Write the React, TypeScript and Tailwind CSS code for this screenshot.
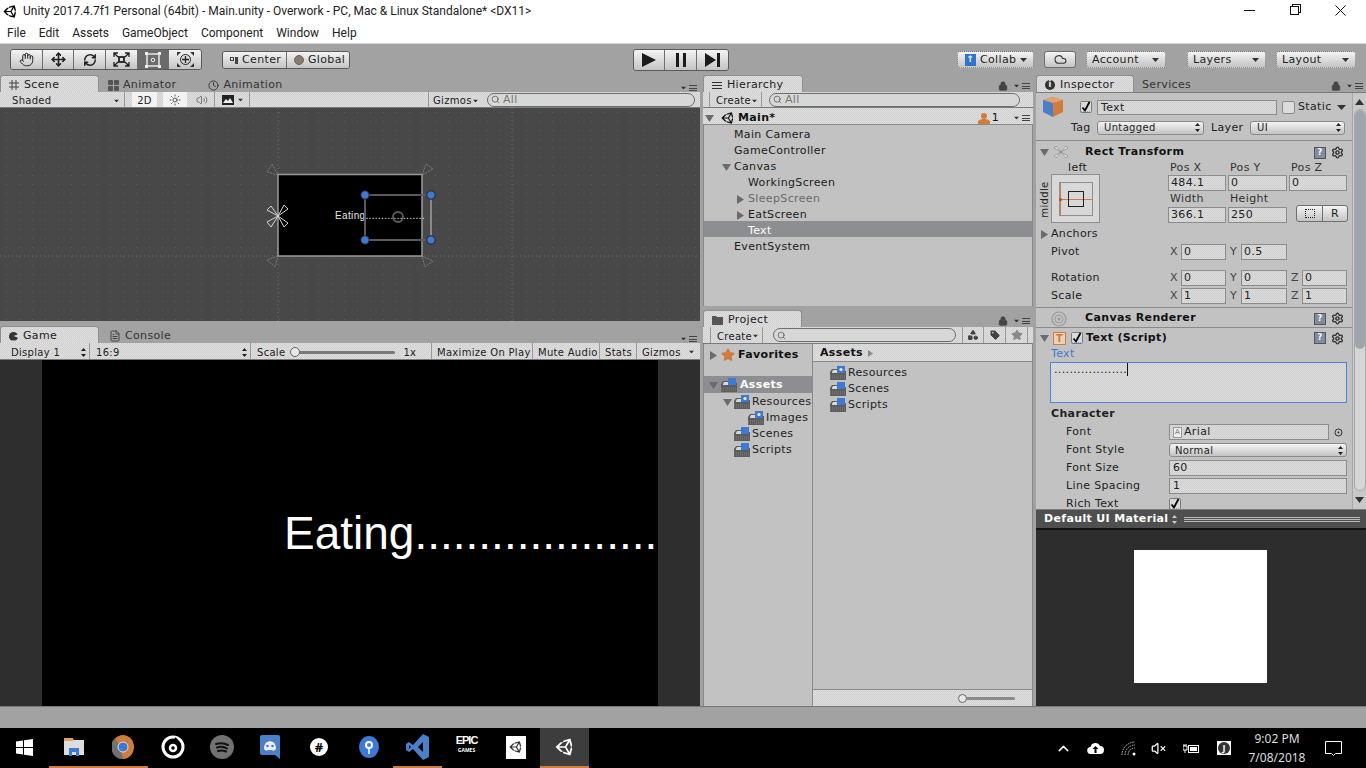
import type { ReactNode } from "react";
import { Hand, Move, RefreshCw, Search, Lock, Star, Tag, Clock, FileText, Settings, Cloud, ChevronUp, VolumeX, Shapes, Sun, Volume2 } from "lucide-react";
import { FaUnity } from "react-icons/fa";

const dither = "bg-[repeating-conic-gradient(#cfcfcf_0_25%,#e0e0e0_0_50%)] bg-[length:2px_2px]";
const field = "bg-[repeating-conic-gradient(#cdcdcd_0_25%,#dedede_0_50%)] bg-[length:2px_2px] border border-[#8c8c8c]";
const btn = "bg-gradient-to-b from-[#f4f4f4] to-[#c4c4c4] border border-[#6f6f6f]";

const Arrow = ({ className = "" }: { className?: string }) => (
  <svg width="7" height="4" viewBox="0 0 7 4" className={className}><path d="M0 0h7L3.5 4z" fill="#333" /></svg>
);

const UpDown = () => (
  <svg width="5" height="9" viewBox="0 0 5 9" className="ml-auto mr-[3px]"><path d="M2.5 0L5 3H0zM2.5 9L0 6h5z" fill="#222" /></svg>
);

const Tri = ({ open = false }: { open?: boolean }) => (
  <svg width="9" height="9" viewBox="0 0 9 9" className="shrink-0">
    {open ? <path d="M0 1h9L4.5 8z" fill="#6b6b6b" /> : <path d="M1 0l7 4.5L1 9z" fill="#6b6b6b" />}
  </svg>
);

const PanelMenu = ({ lock = false }: { lock?: boolean }) => (
  <div className="ml-auto mr-[3px] mt-auto mb-[1px] flex items-center gap-[2px]">
    {lock && <Lock size={10} fill="#444" className="text-[#444] mr-[3px]" />}
    <Arrow className="scale-75" />
    <div className="w-[8px] h-[6px] border-y border-[#444] flex items-center"><div className="w-full h-px bg-[#444]" /></div>
  </div>
);

const TabStrip = ({ children, menuLock = false }: { children: ReactNode; menuLock?: boolean }) => (
  <div className="h-[17px] flex items-stretch text-[#333] shrink-0">
    {children}
    <PanelMenu lock={menuLock} />
  </div>
);

const ActiveTab = ({ w, icon, label }: { w: string; icon: ReactNode; label: string }) => (
  <div className={`${w} ${dither} rounded-t-[3px] border-t border-x border-[#8f8f8f] flex items-center pl-[8px] pt-[2px] gap-[5px] text-[#222] shrink-0`}>
    {icon}
    <span>{label}</span>
  </div>
);

const TabLabel = ({ icon, label, ml }: { icon: ReactNode; label: string; ml: string }) => (
  <div className={`${ml} flex items-center pt-[3px] gap-[4px] text-[#333] shrink-0`}>
    {icon}
    <span>{label}</span>
  </div>
);

const ToolBtn = ({ children, active = false, last = false }: { children: ReactNode; active?: boolean; last?: boolean }) => (
  <div className={`w-[32px] flex items-center justify-center ${last ? "" : "border-r border-[#6f6f6f]"} ${active ? "bg-[#6b6b6b]" : "bg-gradient-to-b from-[#f4f4f4] to-[#c4c4c4]"}`}>
    {children}
  </div>
);

const MainDrop = ({ w, ml, label, icon }: { w: string; ml: string; label: string; icon?: ReactNode }) => (
  <div className={`${w} ${ml} h-[17px] rounded-[3px] ${btn} border-dotted flex items-center pl-[5px] pt-px gap-[3px] text-[#222]`}>
    {icon}
    <span>{label}</span>
    <Arrow className="ml-auto mr-[6px]" />
  </div>
);

const SearchBox = ({ w, ml, all = true }: { w: string; ml: string; all?: boolean }) => (
  <div className={`${w} ${ml} h-[14px] rounded-full bg-[#d6d8d6] border border-[#6e6e6e] flex items-center pl-[3px] text-[#777] text-[11px]`}>
    <Search size={9} strokeWidth={2} className="text-[#555]" />
    {all && <span className="ml-[3px] leading-none">All</span>}
  </div>
);

const Folder = ({ dot = false }: { dot?: boolean }) => (
  <svg width="16" height="14" viewBox="0 0 16 14" className="shrink-0">
    <path d="M0 6l2-3h7v2h7v9H0z" fill="#5d5d5d" />
    <path d="M2 6l1-2h8v3H2z" fill="#d8d8d8" />
    <path d="M0 10h16M0 12h16" stroke="#8c8c8c" strokeWidth=".8" strokeDasharray="1 1" />
    <rect x="7" y="0" width="8" height="7" fill="#3f79d6" />
    {dot && <circle cx="11" cy="3.500" r="1.600" fill="#e8f0ff" />}
  </svg>
);

const FolderRow = ({ pl, label, dot, open = false }: { pl: string; label: string; dot?: boolean; open?: boolean }) => (
  <div className={`h-[16px] flex items-center ${pl} text-[#222] whitespace-nowrap`}>
    {open && <div className="w-[10px] -ml-[11px] mr-px"><Tri open /></div>}
    <Folder dot={dot} />
    <span className="ml-[2px]">{label}</span>
  </div>
);

const HierRow = ({ label, pl, tri, selected = false, dim = false }: { label: string; pl: string; tri?: "open" | "closed"; selected?: boolean; dim?: boolean }) => (
  <div className={`h-[16px] pt-[5px] flex items-center ${pl} ${selected ? "bg-[#8d8e91] text-white" : dim ? "text-[#6a6a6a]" : "text-[#1c1c1c]"}`}>
    {tri && <div className="w-[12px] -ml-[12px]"><Tri open={tri === "open"} /></div>}
    <span>{label}</span>
  </div>
);

const HelpGear = () => (
  <div className="ml-auto flex items-center gap-[5px] mr-[2px]">
    <div className="w-[12px] h-[12px] bg-[#7f8da3] border border-[#555] text-[8px] leading-[10px] text-center text-white font-bold">?</div>
    <Settings size={13} strokeWidth={2.600} className="text-[#333]" />
    <span className="w-px" />
  </div>
);

const NumField = ({ w, label, value, ml = "" }: { w: string; label?: string; value: string; ml?: string }) => (
  <div className={`flex items-center ${ml}`}>
    {label && <span className="w-[11px] text-[#444]">{label}</span>}
    <div className={`${w} h-[16px] ${field} pl-[2px] leading-[14px] text-[#222]`}>{value}</div>
  </div>
);

const VecRow = ({ label, x, y, z, mt = "" }: { label: string; x: string; y: string; z?: string; mt?: string }) => (
  <div className={`h-[16px] flex items-center shrink-0 ${mt}`}>
    <span className="w-[134px] pl-[15px] text-[#222]">{label}</span>
    <NumField w="w-[45px]" label="X" value={x} />
    <NumField w="w-[46px]" ml="ml-[4px]" label="Y" value={y} />
    {z && <NumField w="w-[45px]" ml="ml-[4px]" label="Z" value={z} />}
  </div>
);

const PropRow = ({ label, children }: { label: string; children?: ReactNode }) => (
  <div className="h-[18px] flex items-center shrink-0">
    <span className="w-[133px] pl-[30px] text-[#222] shrink-0">{label}</span>
    {children}
  </div>
);

const Check = ({ size = 12 }: { size?: number }) => (
  <svg width={size} height={size} viewBox="0 0 12 12" className="shrink-0">
    <rect x=".5" y=".5" width="11" height="11" rx="1" fill="#d9d9d9" stroke="#7b7b7b" />
    <path d="M2.500 6.500l2.500 3 4.500-8.500" fill="none" stroke="#000" strokeWidth="1.800" />
    <path d="M1 11h10" stroke="#3f79d6" strokeDasharray="1 1" />
  </svg>
);

const SceneCanvas = () => (
  <svg width="700" height="213" viewBox="0 0 700 213" className="block">
    <g stroke="#6a6a6a" strokeDasharray="1 3" fill="none">
      <line x1="0" y1="148" x2="700" y2="148" />
      <line x1="278" y1="0" x2="278" y2="213" />
      <line x1="512" y1="0" x2="512" y2="213" />
    </g>
    <rect x="278" y="66.500" width="144" height="81.500" fill="#000" stroke="#9a9a9a" strokeWidth="1.500" />
    <text x="335" y="111" fontSize="10" fill="#e8e8e8" fontFamily="Liberation Sans, sans-serif">Eating...................</text>
    <g fill="none">
      <path d="M365 87v45h66M365 87h66" stroke="#5a5a5a" strokeWidth="2" />
      <path d="M431 87v45" stroke="#8a8a8a" strokeWidth="2" />
      <circle cx="398" cy="109" r="5" stroke="#5e5e5e" strokeWidth="1.800" />
    </g>
    <g stroke="#7c7c7c" fill="none" strokeDasharray="2 1">
      <path d="M278 67l-11-3 5-8zM422 67l4-11 7 5zM278 148l-11 4 8 7zM422 148l11 5-8 6z" />
    </g>
    <g stroke="#d4d4d4" fill="none">
      <path d="M278 108l-11-6 4-4zM278 108l6-11 4 4zM278 108l-11 6 4 5zM278 108l6 11 4-4z" />
    </g>
    <g fill="#3f79d6" stroke="#222">
      <circle cx="365" cy="87" r="4.200" />
      <circle cx="431" cy="87" r="4.200" />
      <circle cx="365" cy="132" r="4.200" />
      <circle cx="431" cy="132" r="4.200" />
    </g>
  </svg>
);

const TaskIcon = ({ w, active = false, bar = false, children }: { w: string; active?: boolean; bar?: boolean; children: ReactNode }) => (
  <div className={`${w} h-full flex items-center justify-center border-b-2 ${bar ? "border-[#d17c3f]" : "border-transparent"} ${active ? "bg-[#3d3d3d]" : ""}`}>
    {children}
  </div>
);

export default function App() {
  return (
    <div className="w-[1366px] h-[768px] flex flex-col overflow-hidden bg-[#a2a2a2] text-[11px] font-['DejaVu_Sans',sans-serif] tracking-[0.35px]">
      {/* title bar */}
      <div className="h-[22px] bg-white flex items-center shrink-0 tracking-normal font-['Roboto',sans-serif] text-[12px] text-[#222]">
        <FaUnity size={15} className="ml-[3px] mr-[5px] text-black" />
        <span>Unity 2017.4.7f1 Personal (64bit) - Main.unity - Overwork - PC, Mac &amp; Linux Standalone* &lt;DX11&gt;</span>
        <div className="ml-auto mb-[2px] flex items-center text-[#111]">
          <div className="w-[11px] h-px bg-[#111] mr-[35px]" />
          <div className="w-[9px] h-[9px] border border-[#111] mr-[36px] shadow-[2px_-2px_0_-1px_#fff,2px_-2px_0_0_#111]" />
          <svg width="11" height="11" viewBox="0 0 11 11" className="mr-[20px]"><path d="M.5.500l10 10M10.500.500l-10 10" stroke="#111" /></svg>
        </div>
      </div>
      {/* menu */}
      <div className="h-[21px] bg-white flex items-center gap-[13px] pl-[7px] shrink-0 tracking-normal font-['Roboto',sans-serif] text-[12px] text-[#222]">
        <span>File</span><span>Edit</span><span>Assets</span><span>GameObject</span><span>Component</span><span>Window</span><span>Help</span>
      </div>
      {/* toolbar */}
      <div className="h-[32px] flex items-center pl-[10px] shrink-0 border-t border-[#d8d8d8] text-[#222]">
        <div className="w-[192px] h-[21px] flex border border-[#5a5a5a] rounded-[3px] overflow-hidden">
          <ToolBtn><Hand size={15} strokeWidth={1.600} className="text-[#222]" /></ToolBtn>
          <ToolBtn><Move size={15} strokeWidth={2.600} className="text-[#222]" /></ToolBtn>
          <ToolBtn><RefreshCw size={14} strokeWidth={2.600} className="text-[#222]" /></ToolBtn>
          <ToolBtn>
            <svg width="17" height="15" viewBox="0 0 17 15"><path d="M1 1l4 4M16 1l-4 4M1 14l4-4M16 14l-4-4M1 5V1h4M12 1h4v4M1 10v4h4M12 14h4v-4" fill="none" stroke="#222" strokeWidth="1.300" /><rect x="6" y="5" width="5" height="5" fill="none" stroke="#222" strokeWidth="1.800" /></svg>
          </ToolBtn>
          <ToolBtn active>
            <svg width="16" height="16" viewBox="0 0 16 16"><rect x="2" y="2" width="12" height="12" fill="none" stroke="#e8e8e8" strokeWidth="1.500" /><rect x="0" y="0" width="3" height="3" fill="#eee" /><rect x="13" y="0" width="3" height="3" fill="#eee" /><rect x="0" y="13" width="3" height="3" fill="#eee" /><rect x="13" y="13" width="3" height="3" fill="#eee" /><circle cx="8" cy="8" r="1.800" fill="none" stroke="#eee" /></svg>
          </ToolBtn>
          <ToolBtn last>
            <svg width="19" height="17" viewBox="0 0 19 17"><circle cx="9.500" cy="8.500" r="5" fill="none" stroke="#222" /><path d="M9.500 5v7M6 8.500h7" stroke="#222" strokeWidth="1.300" /><path d="M1 1h4L1 5zM18 1h-4l4 4zM1 16h4l-4-4zM18 16h-4l4-4z" fill="#333" /></svg>
          </ToolBtn>
        </div>
        <div className="ml-[20px] w-[128px] h-[18px] flex border border-[#5a5a5a] rounded-[3px] overflow-hidden">
          <div className="w-[64px] border-r border-[#6f6f6f] bg-gradient-to-b from-[#f4f4f4] to-[#c4c4c4] flex items-center pl-[7px] pt-px gap-[4px]">
            <span className="flex gap-px"><span className="w-[4px] h-[4px] border border-[#444]" /><span className="w-[3px] h-[7px] bg-[#444]" /></span>
            <span>Center</span>
          </div>
          <div className="flex-1 bg-gradient-to-b from-[#f4f4f4] to-[#c4c4c4] flex items-center pl-[7px] pt-px gap-[4px]">
            <span className="w-[10px] h-[10px] rounded-full bg-[#8a7a6a] border border-[#666]" />
            <span>Global</span>
          </div>
        </div>
        <div className="ml-[283px] w-[96px] h-[22px] flex border border-[#5a5a5a] rounded-[3px] overflow-hidden">
          <ToolBtn><svg width="14" height="14" viewBox="0 0 14 14"><path d="M0 0l14 7L0 14z" fill="#1b1b1b" /></svg></ToolBtn>
          <ToolBtn><svg width="10" height="14" viewBox="0 0 10 14"><path d="M0 0h3v14H0zM7 0h3v14H7z" fill="#1b1b1b" /></svg></ToolBtn>
          <ToolBtn last><svg width="15" height="14" viewBox="0 0 15 14"><path d="M0 0l11 7L0 14zM12 0h3v14h-3z" fill="#1b1b1b" /></svg></ToolBtn>
        </div>
        <MainDrop w="w-[77px]" ml="ml-[228px]" label="Collab" icon={<span className="ml-[2px] mr-px w-[11px] h-[12px] bg-[#2f74d0] text-white text-[9px] leading-[11px] text-center font-bold">↑</span>} />
        <div className={`w-[32px] h-[17px] ml-[10px] rounded-[3px] ${btn} flex items-center justify-center`}><Cloud size={13} className="text-[#333]" /></div>
        <MainDrop w="w-[80px]" ml="ml-[10px]" label="Account" />
        <MainDrop w="w-[79px]" ml="ml-[21px]" label="Layers" />
        <MainDrop w="w-[80px]" ml="ml-[10px]" label="Layout" />
      </div>

      {/* panels */}
      <div className="h-[631px] flex shrink-0">
        {/* left column */}
        <div className="w-[700px] flex flex-col shrink-0">
          <TabStrip>
            <ActiveTab w="w-[99px]" label="Scene" icon={<svg width="10" height="10" viewBox="0 0 10 10"><path d="M0 3h10M0 7h10M3 0v10M7 0v10" stroke="#444" /></svg>} />
            <TabLabel ml="ml-[9px]" label="Animator" icon={<span className="w-[11px] h-[11px] grid grid-cols-2 gap-px">{[0, 1, 2, 3].map((i) => <i key={i} className="rounded-[1px] bg-[#555]" />)}</span>} />
            <TabLabel ml="ml-[32px]" label="Animation" icon={<Clock size={11} className="text-[#333]" />} />
          </TabStrip>
          <div className={`h-[16px] flex items-center ${dither} border-b border-[#7b7b7b] text-[#222] text-[10px] tracking-[0.3px] shrink-0`}>
            <div className="ml-[5px] w-[120px] h-full flex items-center pl-[7px] pt-[2px] border-r border-[#9a9a9a]"><span>Shaded</span><Arrow className="ml-auto mr-[4px] scale-75" /></div>
            <div className="ml-[7px] w-[25px] h-full bg-[#f2f2f2] text-center leading-[18px]">2D</div>
            <div className="ml-[6px] w-[24px] h-full bg-[#f2f2f2] flex items-center justify-center"><Sun size={12} className="text-[#555]" /></div>
            <div className="ml-[2px] w-[26px] h-full flex items-center justify-center border-r border-[#9a9a9a]"><Volume2 size={12} className="text-[#777]" /></div>
            <div className="w-[35px] h-full flex items-center pl-[7px] gap-[3px] border-r border-[#9a9a9a]">
              <svg width="12" height="10" viewBox="0 0 12 10"><path d="M0 0h12v10H0z" fill="#222" /><path d="M1 8l3-4 2 2 2-3 3 5z" fill="#eee" /></svg>
              <Arrow className="scale-75" />
            </div>
            <div className="ml-auto w-[53px] h-full flex items-center pl-[4px] pt-[2px] border-l border-[#9a9a9a]"><span>Gizmos</span><Arrow className="ml-auto mr-[2px] scale-75" /></div>
            <SearchBox w="w-[208px]" ml="ml-[6px]" />
            <div className="w-[5px]" />
          </div>
          <div className="h-[213px] bg-[#484848] bg-[radial-gradient(#5c5c5c_0.6px,transparent_0.7px)] bg-[length:13px_9px] shrink-0">
            <SceneCanvas />
          </div>
          <div className="h-[5px] shrink-0" />
          <TabStrip>
            <ActiveTab w="w-[99px]" label="Game" icon={<span className="w-[9px] h-[9px] rounded-full bg-[#333] [clip-path:polygon(0_0,100%_0,100%_30%,50%_50%,100%_70%,100%_100%,0_100%)]" />} />
            <TabLabel ml="ml-[10px]" label="Console" icon={<FileText size={12} className="text-[#444]" />} />
          </TabStrip>
          <div className={`h-[17px] flex items-center ${dither} border-b border-[#7b7b7b] text-[#222] text-[10px] tracking-[0.3px] shrink-0`}>
            <div className="ml-[5px] w-[85px] h-full flex items-center pl-[6px] pt-[2px] border-r border-[#9a9a9a]"><span>Display 1</span><UpDown /></div>
            <div className="w-[161px] h-full flex items-center pl-[6px] pt-[2px] border-r border-[#9a9a9a]"><span>16:9</span><UpDown /></div>
            <div className="w-[181px] h-full flex items-center pl-[6px] pt-[2px] border-r border-[#9a9a9a]">
              <span>Scale</span>
              <div className="relative ml-[6px] w-[104px] h-[3px] bg-[#7a7a7a] rounded-full">
                <span className="absolute -left-px -top-[4px] w-[10px] h-[10px] rounded-full bg-[#e8e8e8] border border-[#666]" />
              </div>
              <span className="ml-[8px]">1x</span>
            </div>
            <div className="w-[101px] h-full flex items-center pl-[5px] pt-[2px] border-r border-[#9a9a9a] whitespace-nowrap">Maximize On Play</div>
            <div className="w-[67px] h-full flex items-center pl-[5px] pt-[2px] border-r border-[#9a9a9a] whitespace-nowrap">Mute Audio</div>
            <div className="w-[37px] h-full flex items-center pl-[5px] pt-[2px] border-r border-[#9a9a9a]">Stats</div>
            <div className="flex-1 h-full flex items-center pl-[5px] pt-[2px]"><span>Gizmos</span><Arrow className="ml-auto mr-[5px] scale-75" /></div>
          </div>
          <div className="flex-1 flex bg-[#2e2e2e] overflow-hidden">
            <div className="w-[42px] shrink-0" />
            <div className="w-[616px] bg-black shrink-0 flex items-center overflow-hidden pl-[242px] text-white text-[46px] leading-none tracking-normal font-['Liberation_Sans',sans-serif] whitespace-nowrap">
              Eating......................
            </div>
          </div>
        </div>

        {/* middle column */}
        <div className="w-[330px] ml-[3px] flex flex-col shrink-0">
          <TabStrip menuLock>
            <ActiveTab w="w-[100px]" label="Hierarchy" icon={<span className="w-[10px] h-[7px] border-y border-[#333] flex items-center"><span className="w-full h-px bg-[#333]" /></span>} />
          </TabStrip>
          <div className={`h-[16px] flex items-center ${dither} border-b border-[#7b7b7b] text-[#222] text-[10px] tracking-[0.3px] shrink-0`}>
            <div className="ml-[6px] w-[53px] h-full flex items-center pl-[6px] pt-[2px] border-x border-[#9a9a9a]"><span>Create</span><Arrow className="ml-auto mr-[3px] scale-75" /></div>
            <SearchBox w="w-[251px]" ml="ml-[7px]" />
          </div>
          <div className={`h-[17px] flex items-center ${dither} border-b border-[#8a8a8a] text-[#111] pl-[2px] pt-[4px] shrink-0`}>
            <Tri open />
            <FaUnity size={14} className="ml-[7px] text-[#111]" />
            <span className="ml-[3px] font-bold">Main*</span>
            <svg width="12" height="11" viewBox="0 0 12 11" className="ml-auto"><circle cx="6" cy="3" r="3" fill="#d17c3f" /><path d="M0 11V9c0-2 3-3 6-3s6 1 6 3v2z" fill="#d17c3f" /></svg>
            <span className="ml-[2px]">1</span>
            <div className="ml-[14px] mr-[3px] flex items-center gap-[2px]"><Arrow className="scale-75" /><div className="w-[8px] h-[6px] border-y border-[#444] flex items-center"><div className="w-full h-px bg-[#444]" /></div></div>
          </div>
          <div className="h-[181px] bg-[#c2c2c2] flex flex-col shrink-0 border-x border-[#888]">
            <HierRow label="Main Camera" pl="pl-[30px]" />
            <HierRow label="GameController" pl="pl-[30px]" />
            <HierRow label="Canvas" pl="pl-[30px]" tri="open" />
            <HierRow label="WorkingScreen" pl="pl-[44px]" />
            <HierRow label="SleepScreen" pl="pl-[44px]" tri="closed" dim />
            <HierRow label="EatScreen" pl="pl-[44px]" tri="closed" />
            <HierRow label="Text" pl="pl-[44px]" selected />
            <HierRow label="EventSystem" pl="pl-[30px]" />
          </div>
          <div className="h-[4px] shrink-0" />
          <TabStrip menuLock>
            <ActiveTab w="w-[99px]" label="Project" icon={<svg width="11" height="9" viewBox="0 0 11 9"><path d="M0 0h4l1 1h6v8H0z" fill="#555" /></svg>} />
          </TabStrip>
          <div className={`h-[17px] flex items-center ${dither} border-b border-[#7b7b7b] text-[#222] text-[10px] tracking-[0.3px] shrink-0`}>
            <div className="ml-[7px] w-[53px] h-full flex items-center pl-[6px] pt-[2px] border-x border-[#9a9a9a]"><span>Create</span><Arrow className="ml-auto mr-[3px] scale-75" /></div>
            <SearchBox w="w-[183px]" ml="ml-[10px]" all={false} />
            <div className="ml-[6px] w-[22px] h-full flex items-center justify-center border-x border-[#9a9a9a]"><Shapes size={12} fill="#444" className="text-[#444]" /></div>
            <div className="w-[22px] h-full flex items-center justify-center border-r border-[#9a9a9a]"><Tag size={12} fill="#444" className="text-[#ddd]" /></div>
            <div className="w-[22px] h-full flex items-center justify-center border-r border-[#9a9a9a]"><Star size={12} fill="#888" className="text-[#888]" /></div>
          </div>
          <div className="flex-1 flex bg-[#c2c2c2] border-x border-[#888] min-h-0">
            <div className="w-[109px] border-r border-[#8a8a8a] shrink-0 overflow-hidden pt-[2px]">
              <div className="h-[17px] flex items-center pl-[5px] pt-px font-bold text-[#111]">
                <Tri />
                <Star size={14} fill="#d17c3f" className="text-[#d17c3f] ml-[3px]" />
                <span className="ml-[3px]">Favorites</span>
              </div>
              <div className="h-[13px]" />
              <div className="h-[17px] flex items-center pl-[5px] pt-px bg-[#8d8e91] text-white font-bold">
                <Tri open />
                <div className="ml-[3px]"><Folder /></div>
                <span className="ml-[3px]">Assets</span>
              </div>
              <div className="pt-px">
                <FolderRow pl="pl-[30px]" label="Resources" dot open />
                <FolderRow pl="pl-[44px]" label="Images" dot />
                <FolderRow pl="pl-[30px]" label="Scenes" />
                <FolderRow pl="pl-[30px]" label="Scripts" />
              </div>
            </div>
            <div className="flex-1 flex flex-col">
              <div className={`h-[18px] ${dither} border-b border-[#8a8a8a] flex items-center pl-[7px] pt-[2px] gap-[5px] font-bold text-[#111] shrink-0`}>
                <span>Assets</span>
                <svg width="5" height="7" viewBox="0 0 5 7"><path d="M0 0l5 3.500L0 7z" fill="#888" /></svg>
              </div>
              <div className="pt-[3px] flex-1">
                <FolderRow pl="pl-[17px]" label="Resources" dot />
                <FolderRow pl="pl-[17px]" label="Scenes" />
                <FolderRow pl="pl-[17px]" label="Scripts" />
              </div>
              <div className={`h-[17px] ${dither} border-t border-[#8a8a8a] flex items-center pl-[146px] shrink-0`}>
                <div className="relative w-[56px] h-[3px] rounded-full bg-[#8a8a8a]">
                  <span className="absolute -left-px -top-[3px] w-[9px] h-[9px] rounded-full bg-[#e8e8e8] border border-[#666]" />
                </div>
              </div>
            </div>
          </div>
        </div>

        {/* inspector */}
        <div className="w-[330px] ml-[3px] flex flex-col shrink-0">
          <TabStrip menuLock>
            <ActiveTab w="w-[98px]" label="Inspector" icon={<span className="w-[10px] h-[10px] rounded-full bg-[#333] text-white text-[8px] leading-[10px] text-center font-bold">i</span>} />
            <TabLabel ml="ml-[8px]" label="Services" icon={null} />
          </TabStrip>
          <div className="h-[417px] flex bg-[#c2c2c2] shrink-0 overflow-hidden border-t border-[#7b7b7b]">
            <div className="w-[316px] shrink-0 flex flex-col">
              <div className="h-[48px] pt-[6px] pl-[6px] flex flex-col gap-[6px] shrink-0 border-b border-[#8a8a8a]">
                <div className="h-[16px] flex items-center">
                  <svg width="22" height="20" viewBox="0 0 22 20" className="shrink-0"><path d="M11 0l10 3v12l-10 5z" fill="#d17c3f" /><path d="M11 0L1 3v12l10 5z" fill="#4a80c8" /><path d="M1 3l10-3 10 3-10 3z" fill="#e0a070" /></svg>
                  <div className="ml-[16px] w-[12px] h-[12px]"><Check /></div>
                  <div className={`ml-[5px] w-[180px] h-[15px] ${field} pl-[3px] leading-[13px] text-[#222]`}>Text</div>
                  <span className="ml-[5px] w-[13px] h-[13px] bg-[#dcdcdc] border border-[#8a8a8a] rounded-[2px]" />
                  <span className="ml-[3px] text-[#222]">Static</span>
                  <svg width="9" height="5" viewBox="0 0 9 5" className="ml-[5px]"><path d="M0 0h9L4.500 5z" fill="#333" /></svg>
                </div>
                <div className="h-[14px] flex items-center">
                  <span className="ml-[29px] w-[26px] text-[#222]">Tag</span>
                  <div className={`w-[107px] h-[14px] -mt-px rounded-[3px] ${btn} border-[#8a8a8a] flex items-center pl-[6px] text-[#222] text-[10px]`}>Untagged<UpDown /></div>
                  <span className="ml-[7px] w-[39px] text-[#222]">Layer</span>
                  <div className={`w-[95px] h-[14px] -mt-px rounded-[3px] ${btn} border-[#8a8a8a] flex items-center pl-[6px] text-[#222] text-[10px]`}>UI<UpDown /></div>
                </div>
              </div>
              <div className="h-[20px] flex items-center pl-[4px] pt-[3px] shrink-0">
                <Tri open />
                <svg width="16" height="15" viewBox="0 0 16 15" className="ml-[4px]"><path d="M8 7L3 1 1 3zM8 7l5-6 2 2zM8 7l-5 6-2-2zM8 7l5 6 2-2z" fill="#dfdfdf" stroke="#888" strokeWidth=".7" /></svg>
                <span className="ml-[16px] font-bold text-[#111]">Rect Transform</span>
                <HelpGear />
              </div>
              {/* rect transform body */}
              <div className="h-[64px] flex shrink-0">
                <div className="w-[132px] relative shrink-0">
                  <span className="ml-[32px] text-[#222] block h-[13px] leading-[13px]">left</span>
                  <div className="absolute left-[15px] top-[13px] w-[49px] h-[49px] bg-[#d8d8d8] border border-[#8f8f8f] flex items-center justify-center">
                    <div className="w-[34px] h-[34px] border border-[#8f8f8f] relative flex items-center justify-center">
                      <div className="absolute top-1/2 left-0 w-full h-px bg-[#d17c3f]" />
                      <div className="absolute left-0 top-0 w-px h-full bg-[#d17c3f]" />
                      <div className="w-[16px] h-[16px] border border-[#222] relative" />
                      <div className="absolute left-[-1px] top-[15px] w-[3px] h-[3px] rounded-full bg-[#a85a20]" />
                    </div>
                  </div>
                  <span className="absolute left-[-10px] top-[31px] -rotate-90 text-[10px] text-[#222]">middle</span>
                </div>
                <div className="flex flex-col">
                  <div className="h-[14px] flex text-[#333] leading-[14px]"><span className="w-[60px] pl-[2px]">Pos X</span><span className="w-[61px] pl-[2px]">Pos Y</span><span className="pl-[2px]">Pos Z</span></div>
                  <div className="h-[16px] flex gap-[2px]">
                    <div className={`w-[58px] ${field} pl-[2px] leading-[14px] text-[#222]`}>484.1</div>
                    <div className={`w-[59px] ${field} pl-[2px] leading-[14px] text-[#222]`}>0</div>
                    <div className={`w-[58px] ${field} pl-[2px] leading-[14px] text-[#222]`}>0</div>
                  </div>
                  <div className="h-[16px] flex text-[#333] leading-[16px]"><span className="w-[60px] pl-[2px]">Width</span><span className="w-[61px] pl-[2px]">Height</span></div>
                  <div className="h-[16px] flex gap-[2px]">
                    <div className={`w-[58px] ${field} pl-[2px] leading-[14px] text-[#222]`}>366.1</div>
                    <div className={`w-[59px] ${field} pl-[2px] leading-[14px] text-[#222]`}>250</div>
                    <div className={`ml-[7px] -mt-[2px] w-[52px] h-[17px] rounded-[3px] ${btn} flex`}>
                      <div className="w-[26px] border-r border-[#6f6f6f] flex items-center justify-center"><span className="w-[10px] h-[9px] border border-dotted border-[#222]" /></div>
                      <div className="flex-1 text-center leading-[15px] text-[#222]">R</div>
                    </div>
                  </div>
                </div>
              </div>
              <div className="h-[19px] flex items-center pl-[4px] text-[#222] shrink-0"><Tri /><span className="ml-[2px]">Anchors</span></div>
              <VecRow label="Pivot" x="0" y="0.5" />
              <VecRow label="Rotation" x="0" y="0" z="0" mt="mt-[10px]" />
              <VecRow label="Scale" x="1" y="1" z="1" mt="mt-[2px]" />
              <div className="h-[20px] mt-[3px] flex items-center border-t border-[#8a8a8a] pl-[15px] pt-[2px] shrink-0">
                <svg width="16" height="16" viewBox="0 0 16 16"><circle cx="8" cy="8" r="7" fill="none" stroke="#999" strokeWidth="1.200" /><circle cx="8" cy="8" r="4" fill="none" stroke="#999" /><circle cx="8" cy="8" r="1.500" fill="#999" /></svg>
                <span className="ml-[18px] font-bold text-[#111]">Canvas Renderer</span>
                <HelpGear />
              </div>
              <div className="h-[19px] flex items-center border-t border-[#8a8a8a] pl-[4px] pt-[2px] shrink-0">
                <Tri open />
                <span className="ml-[4px] w-[13px] h-[13px] bg-[#e8d2be] border border-[#d17c3f] text-[#d17c3f] text-[10px] leading-[11px] text-center font-bold">T</span>
                <div className="ml-[5px]"><Check /></div>
                <span className="ml-[3px] font-bold text-[#111]">Text (Script)</span>
                <HelpGear />
              </div>
              <div className="h-[15px] pl-[15px] text-[#3f79d6] leading-[15px] shrink-0">Text</div>
              <div className={`ml-[14px] w-[297px] h-[41px] ${field} !border-[#4a84dc] mt-px pl-[3px] pt-px text-[#222] leading-[12px] shrink-0`}>
                <span className="border-r border-[#111] pr-0">...................</span>
              </div>
              <div className="h-[18px] mt-[2px] pl-[15px] font-bold text-[#222] flex items-center shrink-0">Character</div>
              <PropRow label="Font">
                <div className={`w-[160px] h-[16px] ${field} flex items-center pl-[3px] gap-[2px] text-[#222]`}>
                  <span className="w-[9px] h-[11px] bg-[#eee] border border-[#999] text-[7px] leading-[9px] text-center text-[#777]">A</span>Arial
                </div>
                <svg width="9" height="9" viewBox="0 0 9 9" className="ml-[5px]"><circle cx="4.500" cy="4.500" r="3.500" fill="none" stroke="#333" /><circle cx="4.500" cy="4.500" r="1" fill="#333" /></svg>
              </PropRow>
              <PropRow label="Font Style">
                <div className={`w-[178px] h-[14px] rounded-[3px] ${btn} border-[#8a8a8a] flex items-center pl-[5px] text-[10px] text-[#222]`}>Normal<UpDown /></div>
              </PropRow>
              <PropRow label="Font Size"><div className={`w-[178px] h-[16px] ${field} pl-[3px] leading-[14px] text-[#222]`}>60</div></PropRow>
              <PropRow label="Line Spacing"><div className={`w-[178px] h-[16px] ${field} pl-[3px] leading-[14px] text-[#222]`}>1</div></PropRow>
              <PropRow label="Rich Text"><Check /></PropRow>
            </div>
            <div className="flex-1 bg-[#c8c8c8] border-l border-[#a8a8a8] flex flex-col items-center">
              <svg width="9" height="6" viewBox="0 0 9 6" className="mt-[6px] shrink-0"><path d="M4.500 0L9 6H0z" fill="#333" /></svg>
              <div className="mt-[4px] w-[12px] h-[382px] rounded-full bg-[#d6d6d6] border border-[#aaa] shrink-0 overflow-hidden">
                <div className="w-full h-[239px] rounded-full bg-[#9fa5ad]" />
              </div>
              <svg width="9" height="6" viewBox="0 0 9 6" className="mt-auto mb-[6px] shrink-0"><path d="M0 0h9L4.500 6z" fill="#333" /></svg>
            </div>
          </div>
          <div className="h-[19px] bg-[#4f4f4f] border-t border-[#7a7a7a] flex items-center pl-[8px] text-white font-bold shrink-0">
            <span>Default UI Material</span>
            <svg width="5" height="9" viewBox="0 0 5 9" className="ml-[4px]"><path d="M2.500 0L5 3H0zM2.500 9L0 6h5z" fill="#ccc" /></svg>
            <div className="ml-[7px] w-[176px] h-[5px] border-y border-[#bbb] flex items-center"><div className="w-full h-px bg-[#bbb]" /></div>
          </div>
          <div className="flex-1 bg-[#2d2d2d] border-t-2 border-[#111] pl-[98px] pt-[20px]">
            <div className="w-[133px] h-[133px] bg-white" />
          </div>
        </div>
      </div>

      {/* status bar */}
      <div className="h-[22px] border-t border-[#777] shrink-0" />

      {/* taskbar */}
      <div className="h-[40px] bg-black flex items-center shrink-0 tracking-normal font-['Noto_Sans',sans-serif] text-white">
        <TaskIcon w="w-[49px]">
          <svg width="17" height="17" viewBox="0 0 17 17"><path d="M0 2.500l7-1v6.500H0zM8 1.300L17 0v8H8zM0 9h7v6.500l-7-1zM8 9h9v8l-9-1.300z" fill="#fff" /></svg>
        </TaskIcon>
        <TaskIcon w="w-[49px]" bar>
          <svg width="22" height="20" viewBox="0 0 22 20"><path d="M1 1h8l2 2h10v15H1z" fill="#ddd" /><path d="M1 1h9v3H1z" fill="#d9a36b" /><path d="M6 11h10v8h-3v-4H9v4H6z" fill="#3f79d6" /></svg>
        </TaskIcon>
        <TaskIcon w="w-[50px]" bar>
          <svg width="22" height="24" viewBox="0 0 22 24"><ellipse cx="11" cy="12" rx="11" ry="12" fill="#d17c3f" /><path d="M11 24A11 12 0 0 1 3 3l5 9z" fill="#707070" /><circle cx="11" cy="12" r="5" fill="#3f79d6" stroke="#ddd" /></svg>
        </TaskIcon>
        <TaskIcon w="w-[50px]">
          <svg width="24" height="24" viewBox="0 0 24 24"><circle cx="12" cy="12" r="10" fill="none" stroke="#fff" strokeWidth="3" /><circle cx="12" cy="13" r="3" fill="none" stroke="#fff" strokeWidth="2.500" /><path d="M14 3l5 6" stroke="#000" strokeWidth="2" /></svg>
        </TaskIcon>
        <TaskIcon w="w-[48px]">
          <svg width="24" height="24" viewBox="0 0 24 24"><circle cx="12" cy="12" r="12" fill="#727272" /><path d="M6 9c4-1 8-1 12 1M7 12.500c3-1 7-1 10 1M8 16c3-1 5-1 8 .500" fill="none" stroke="#111" strokeWidth="2" strokeLinecap="round" /></svg>
        </TaskIcon>
        <TaskIcon w="w-[48px]">
          <svg width="20" height="24" viewBox="0 0 20 24"><path d="M2 0h16a2 2 0 0 1 2 2v22l-5-4H2a2 2 0 0 1-2-2V2a2 2 0 0 1 2-2z" fill="#4a80c8" /><path d="M4 14c0-3 1-6 3-7 3-1 3-1 6 0 2 1 3 4 3 7-2 2-3 2-4 1H8c-1 1-2 1-4-1z" fill="#eee" /><circle cx="7.500" cy="11" r="1.300" fill="#4a80c8" /><circle cx="12.500" cy="11" r="1.300" fill="#4a80c8" /></svg>
        </TaskIcon>
        <TaskIcon w="w-[50px]">
          <div className="w-[18px] h-[18px] rounded-full bg-white flex items-center justify-center text-black text-[13px] font-bold leading-none">#</div>
        </TaskIcon>
        <TaskIcon w="w-[49px]">
          <svg width="20" height="24" viewBox="0 0 20 24"><ellipse cx="10" cy="12" rx="10" ry="11" fill="#3f79d6" /><circle cx="10" cy="10" r="3" fill="none" stroke="#fff" strokeWidth="2" /><path d="M10 13v6" stroke="#fff" strokeWidth="1.500" /></svg>
        </TaskIcon>
        <TaskIcon w="w-[49px]" bar>
          <svg width="24" height="26" viewBox="0 0 24 26"><path d="M17 0l6 3v20l-6 3L7 15l-4 3-3-2V10l3-2 4 3z" fill="#4a80c8" /><path d="M17 8l-5 5 5 5zM3 11v4l2-2z" fill="#000" /></svg>
        </TaskIcon>
        <TaskIcon w="w-[49px]">
          <div className="w-[18px] h-[24px] flex flex-col items-center leading-none"><span className="text-[11px] font-bold font-['Liberation_Sans',sans-serif] tracking-[-1px]">EPIC</span><span className="text-[5px] mt-[2px] font-bold">GAMES</span></div>
        </TaskIcon>
        <TaskIcon w="w-[49px]">
          <div className="w-[20px] h-[23px] bg-white flex items-center justify-center"><FaUnity size={14} className="text-[#333]" /></div>
        </TaskIcon>
        <TaskIcon w="w-[49px]" active bar>
          <FaUnity size={20} className="text-white" />
        </TaskIcon>
        <div className="ml-auto flex items-center h-full">
          <ChevronUp size={17} className="mr-[15px]" />
          <svg width="17" height="12" viewBox="0 0 17 12" className="mr-[17px]"><path d="M4 12a3.500 3.500 0 0 1-.5-7 5 5 0 0 1 9.500-1 4 4 0 0 1 0 8z" fill="#fff" /><path d="M8.500 4l3 3H9.500v4h-2V7H5.500z" fill="#000" /></svg>
          <svg width="15" height="15" viewBox="0 0 15 15" fill="none" stroke="#ccc" className="mr-[15px]"><path d="M1 14A13 13 0 0 1 14 1M4 14A10 10 0 0 1 14 4M7 14a7 7 0 0 1 7-7" strokeDasharray="1.500 1" /><circle cx="13" cy="13" r="1.500" fill="#fff" stroke="none" /></svg>
          <VolumeX size={15} className="mr-[17px]" />
          <svg width="17" height="11" viewBox="0 0 17 11" className="mr-[17px]"><path d="M0 3h4v4H0zM1 1v2M3 1v2M2 7v3" stroke="#fff" fill="none" /><rect x="5.500" y="2.500" width="10" height="7" fill="none" stroke="#fff" /><rect x="7" y="4" width="7" height="4" fill="#fff" /></svg>
          <div className="w-[14px] h-[14px] bg-white flex items-center justify-center mr-[6px]"><span className="w-[12px] h-[12px] rounded-full bg-[#333] text-[9px] leading-[12px] text-center font-bold">J</span></div>
          <div className="w-[80px] text-center text-[12px] leading-[19px] text-[#ddd]"><div>9:02 PM</div><div>7/08/2018</div></div>
          <svg width="17" height="17" viewBox="0 0 17 17" fill="none" stroke="#fff" className="ml-[8px] mr-[24px]"><path d="M.5 1.500h16v12h-6l-2 2-2-2h-6z" /></svg>
        </div>
      </div>
    </div>
  );
}
